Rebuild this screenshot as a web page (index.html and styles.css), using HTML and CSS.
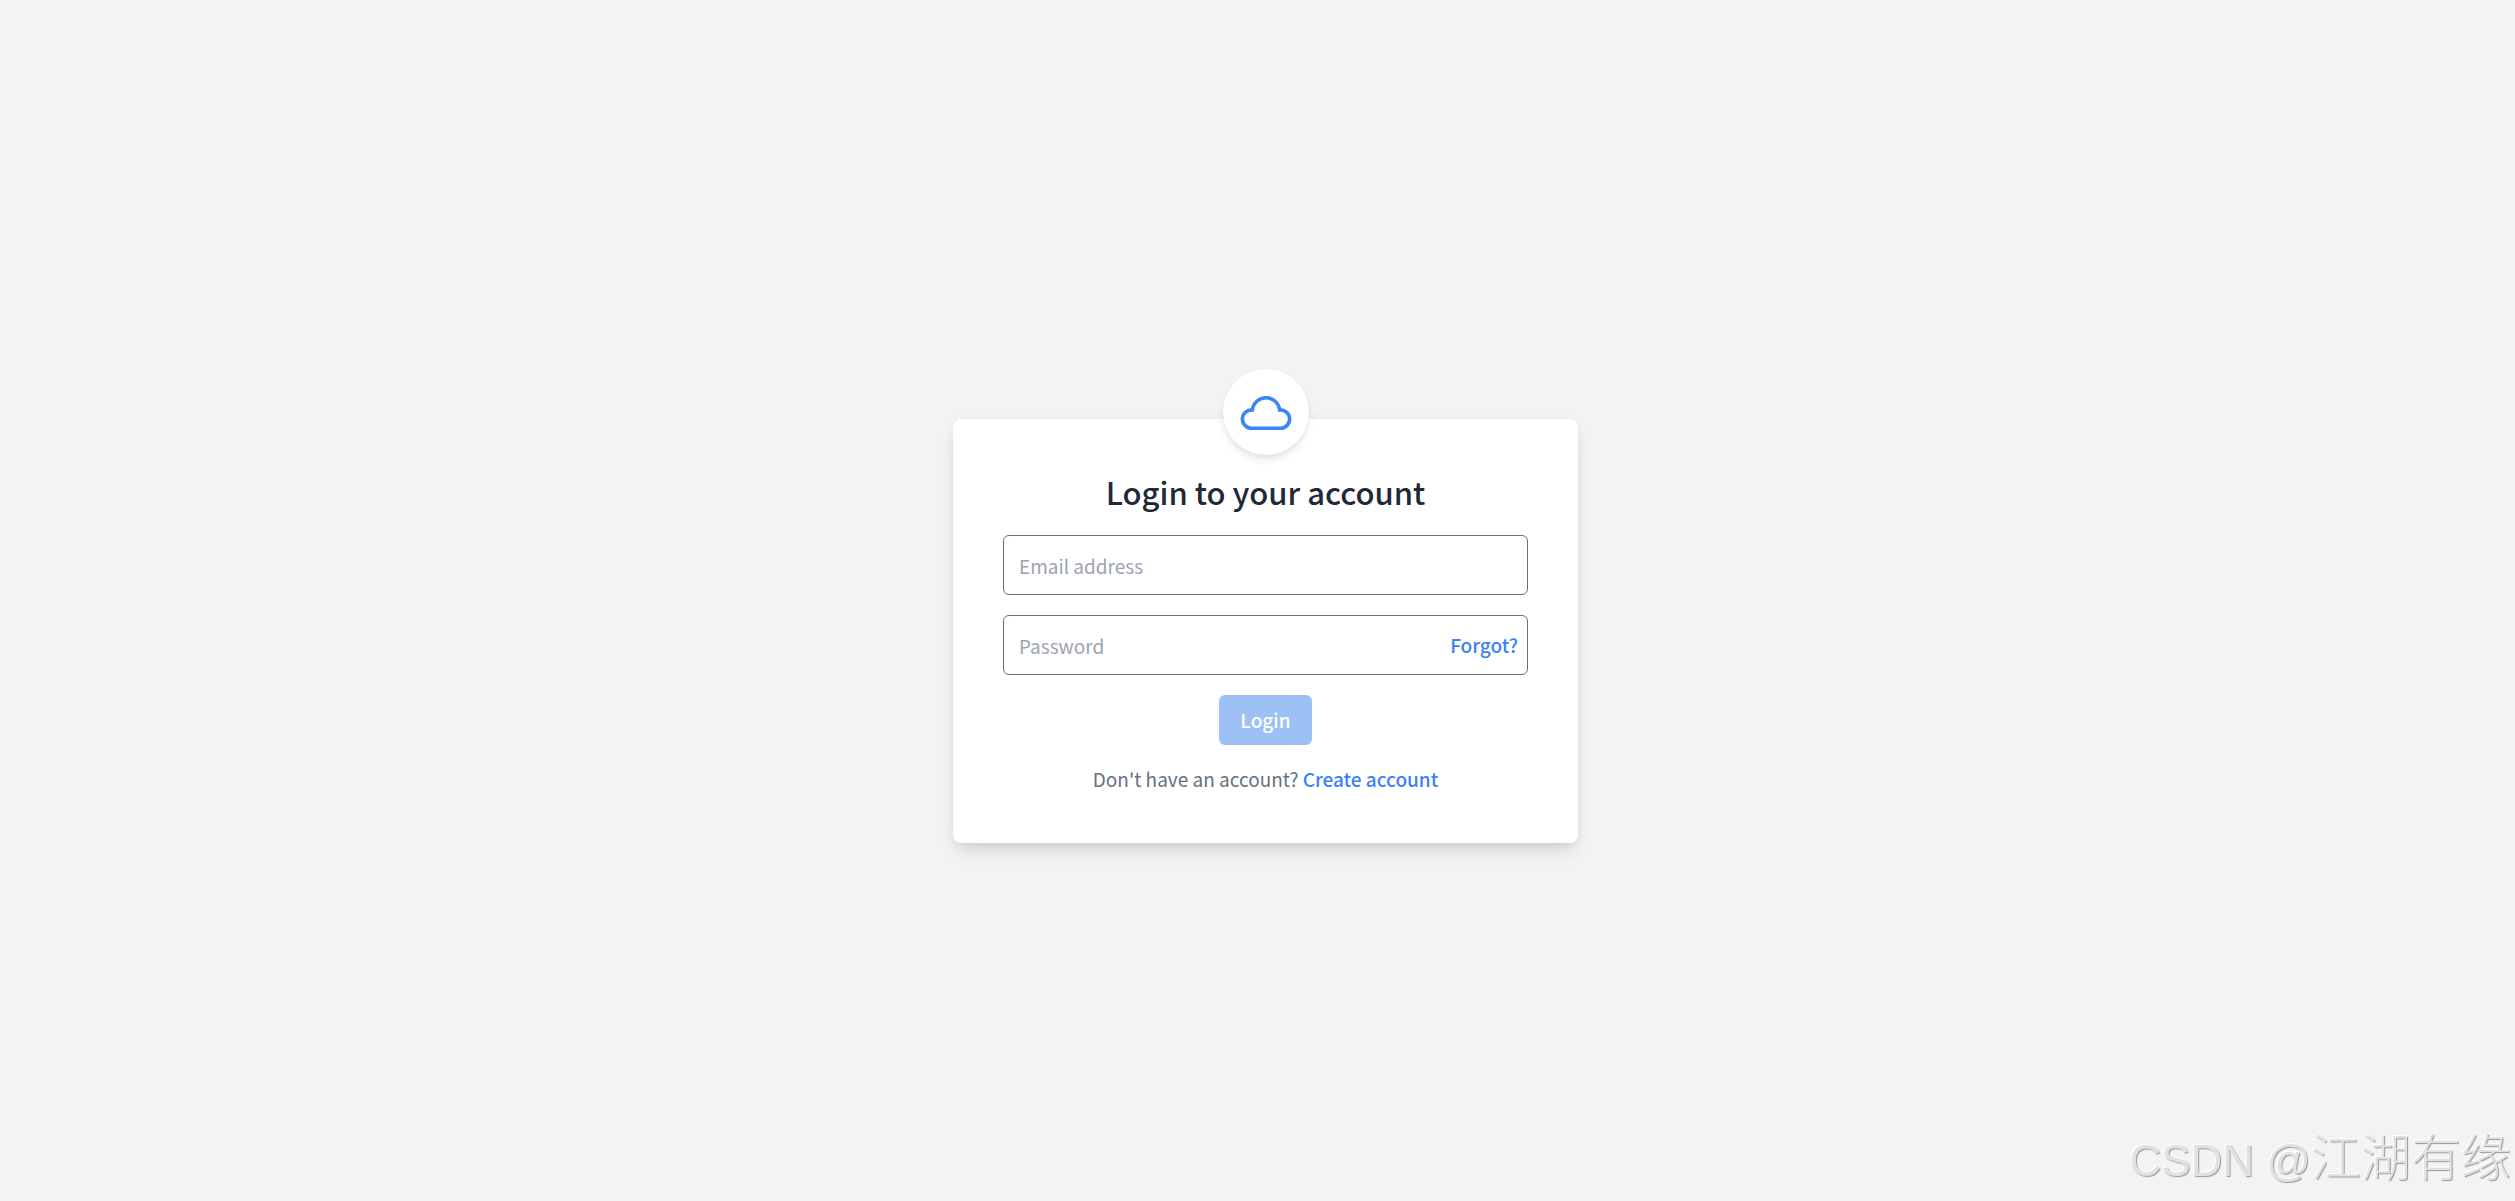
FILE: index.html
```html
<!DOCTYPE html>
<html lang="en">
<head>
  <meta charset="utf-8">
  <title>Login</title>
  <link rel="stylesheet" href="styles.css">
</head>
<body>
  <main class="card">
    <div class="logo">
      <svg viewBox="0 0 52 36" fill="none" stroke="#3b86f3" stroke-width="3.6">
        <path d="M10.8 34.2 A9 9 0 1 1 12.3 15.9 A13.8 13.8 0 0 1 39.7 15.9 A9 9 0 1 1 41.2 34.2 Z"/>
      </svg>
    </div>

    <h1>Login to your account</h1>

    <form>
      <div class="field">
        <input type="email" placeholder="Email address" aria-label="Email address">
      </div>
      <div class="field">
        <input type="password" placeholder="Password" aria-label="Password">
        <a class="forgot" href="#">Forgot?</a>
      </div>
      <button type="submit" disabled>Login</button>
    </form>

    <p class="signup">Don't have an account? <a href="#">Create account</a></p>
  </main>

  <div class="watermark">CSDN @<span lang="zh-CN">江湖有缘</span></div>
</body>
</html>
```
FILE: styles.css
```css
* {
  box-sizing: border-box;
}

body {
  margin: 0;
  padding: 61px 0 0 16px;
  min-height: 100vh;
  display: flex;
  align-items: center;
  justify-content: center;
  background-color: #f3f3f6;
  font-family: "Noto Sans CJK SC", sans-serif;
  font-size: 19px;
  line-height: 28px;
}

a {
  color: #3b82f6;
  font-weight: 500;
  text-decoration: none;
}

.card {
  position: relative;
  width: 100%;
  max-width: 625px;
  padding: 50px;
  background-color: #fff;
  border-radius: 8px;
  box-shadow: 0 12px 18px -4px rgba(0, 0, 0, 0.1), 0 5px 8px -2px rgba(0, 0, 0, 0.05), 0 0 12px rgba(0, 0, 0, 0.04);
  text-align: center;
}

/* round badge over the top edge of the card */
.logo {
  position: absolute;
  top: -50px;
  left: 0;
  right: 0;
  margin: 0 auto;
  display: flex;
  align-items: center;
  justify-content: center;
  width: 86px;
  height: 86px;
  background-color: #fff;
  border-radius: 50%;
  box-shadow: 0 5px 8px -1px rgba(0, 0, 0, 0.1), 0 2px 5px -1px rgba(0, 0, 0, 0.06);
}

.logo svg {
  width: 52px;
  height: 36px;
}

h1 {
  margin: 0 0 20px;
  color: #1f2937;
  font-size: 31px;
  font-weight: 500;
  line-height: 46px;
}

form {
  display: flex;
  flex-direction: column;
  align-items: center;
  gap: 20px;
}

.field {
  position: relative;
  width: 100%;
}

input {
  display: block;
  width: 100%;
  height: 60px;
  padding: 0 15px;
  border: 1px solid #64727f;
  border-radius: 6px;
  background-color: #fff;
  font: inherit;
}

input::placeholder {
  color: #9ca3af;
}

.forgot {
  position: absolute;
  top: 16px;
  right: 10px;
}

button {
  height: 50px;
  padding: 0 21px;
  border: 0;
  border-radius: 6px;
  background-color: #9dc1f6;
  color: #fff;
  font: inherit;
  font-weight: 500;
}

.signup {
  margin: 20px 0 0;
  color: #64727f;
}

.watermark {
  position: fixed;
  right: 4px;
  bottom: 8px;
  color: #e0e1e3;
  font-family: "Liberation Sans", "Noto Sans CJK SC", sans-serif;
  font-size: 44px;
  line-height: 64px;
  text-shadow: 1px 1px 1px #999, -1px -1px 0 #fff;
}

.watermark span {
  font-family: "Noto Sans CJK SC", sans-serif;
  font-size: 50px;
  font-weight: 300;
}
```
